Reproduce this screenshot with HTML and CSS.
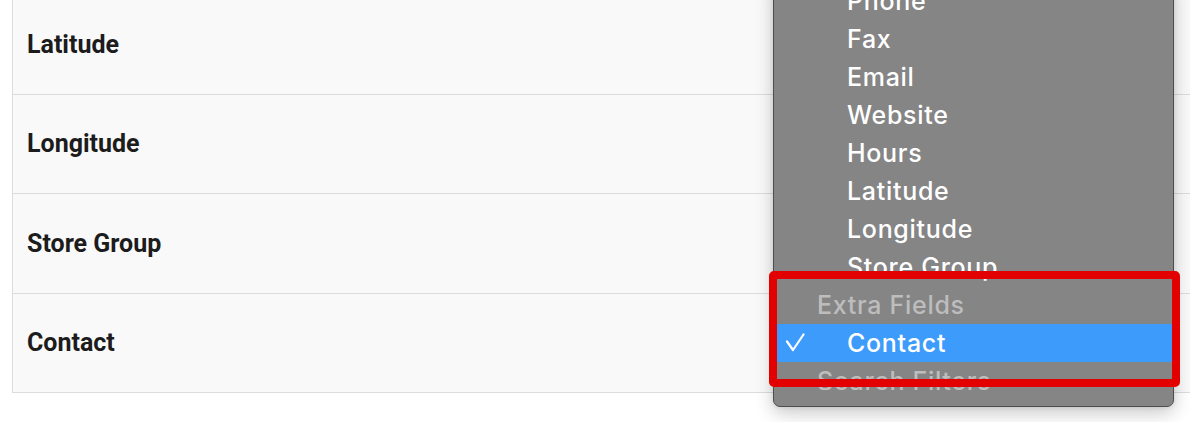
FILE: index.html
```html
<!DOCTYPE html>
<html>
<head>
<meta charset="utf-8">
<link rel="stylesheet" href="styles.css">
</head>
<body>
<div class="page">
  <div class="table">
    <div class="row"><span class="label">Latitude</span></div>
    <div class="row"><span class="label">Longitude</span></div>
    <div class="row"><span class="label">Store Group</span></div>
    <div class="row"><span class="label">Contact</span></div>
  </div>

  <div class="menu">
    <div class="menu-list">
      <div class="item">Phone</div>
      <div class="item">Fax</div>
      <div class="item">Email</div>
      <div class="item">Website</div>
      <div class="item">Hours</div>
      <div class="item">Latitude</div>
      <div class="item">Longitude</div>
      <div class="item">Store Group</div>
      <div class="group">Extra Fields</div>
      <div class="item selected">
        <svg class="check" width="20" height="20" viewBox="0 0 20 20"><polyline points="2,8.5 8,17 18.5,1.5" fill="none" stroke="#fff" stroke-width="2.2" stroke-linecap="round" stroke-linejoin="round"/></svg>
        <span>Contact</span>
      </div>
      <div class="group">Search Filters</div>
    </div>
    <div class="menu-foot"></div>
  </div>

  <div class="highlight-box"></div>
</div>
</body>
</html>
```
FILE: styles.css
```css
html, body {
  margin: 0;
  padding: 0;
  background: #ffffff;
  overflow: hidden;
}

.page {
  position: relative;
  width: 1190px;
  height: 422px;
  overflow: hidden;
}

.table {
  margin: -5px 0 0 12px;
  border-left: 1px solid #dcdcdc;
  border-bottom: 1px solid #dcdcdc;
  background: #f9f9f9;
  display: flex;
  flex-direction: column;
}

.row {
  height: 98.5px;
  display: flex;
  align-items: center;
  padding-left: 14px;
  border-bottom: 1px solid #dcdcdc;
}

.row:last-child {
  border-bottom: none;
}

.label {
  font-family: Roboto, "Liberation Sans", sans-serif;
  font-weight: 700;
  font-size: 25px;
  color: #1c1c1c;
}

.menu {
  position: absolute;
  left: 773px;
  top: -23px;
  width: 401px;
  height: 430px;
  box-sizing: border-box;
  border: 1px solid #4e4e4e;
  border-radius: 7px;
  background: #858585;
  box-shadow: 0 6px 18px rgba(0, 0, 0, 0.22), 0 0 4px rgba(0, 0, 0, 0.1);
  display: flex;
  flex-direction: column;
  font-family: Inter, "Liberation Sans", sans-serif;
  font-size: 25px;
  font-weight: 500;
  color: #ffffff;
}

.menu-list {
  height: 412px;
  padding-top: 4px;
  box-sizing: border-box;
  overflow: hidden;
  display: flex;
  flex-direction: column;
}

.item, .group {
  height: 38px;
  flex: 0 0 38px;
  display: flex;
  align-items: center;
  padding-left: 73px;
  letter-spacing: 0.7px;
  position: relative;
}

.group {
  padding-left: 43px;
  color: #bdbdbd;
}

.item.selected {
  background: #3d9bfb;
}

.check {
  position: absolute;
  left: 11px;
  top: 9px;
}

.menu-foot {
  flex: 1;
}

.highlight-box {
  position: absolute;
  left: 769px;
  top: 271px;
  width: 411px;
  height: 116px;
  box-sizing: border-box;
  border: 8px solid #e20000;
  border-radius: 5px;
}
```
